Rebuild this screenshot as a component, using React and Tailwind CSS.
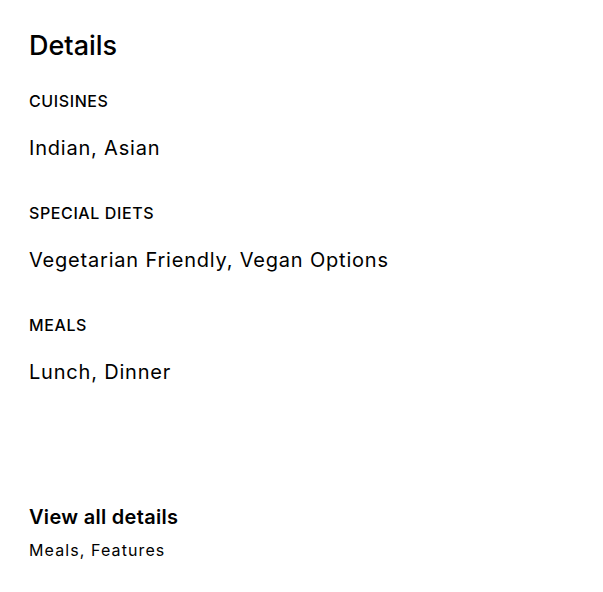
export default function App() {
  const sections = [
    { label: "CUISINES", value: "Indian, Asian" },
    { label: "SPECIAL DIETS", value: "Vegetarian Friendly, Vegan Options" },
    { label: "MEALS", value: "Lunch, Dinner" },
  ];
  return (
    <div className="w-[603px] h-[592px] bg-white text-black pl-[29px] pt-[30px]" style={{ fontFamily: "Inter, 'Noto Sans', sans-serif" }}>
      <h2 className="text-[27px] leading-[32px] font-medium">Details</h2>
      <div className="flex flex-col gap-[41px] mt-[29px]">
        {sections.map((s) => (
          <div key={s.label} className="flex flex-col gap-[23px]">
            <div className="text-[16px] leading-[20px] font-medium tracking-[0.6px]">{s.label}</div>
            <div className="text-[20px] leading-[28px] tracking-[0.8px]">{s.value}</div>
          </div>
        ))}
      </div>
      <div className="mt-[117px] flex flex-col gap-[9px]">
        <div className="text-[20px] leading-[28px] font-semibold tracking-[0.3px]">View all details</div>
        <div className="text-[16px] leading-[20px] tracking-[1.1px]">Meals, Features</div>
      </div>
    </div>
  );
}
